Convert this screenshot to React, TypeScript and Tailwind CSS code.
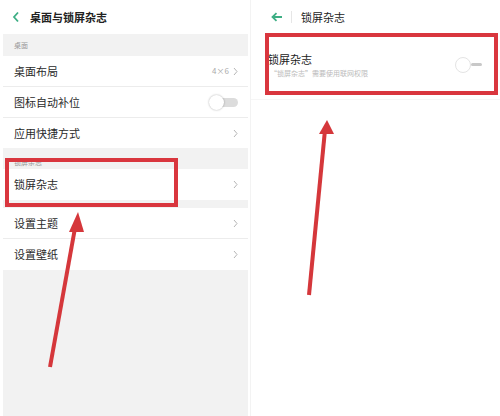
import React from "react";

const font = { fontFamily: '"Noto Sans CJK SC", "Noto Sans", sans-serif' };

function Chevron() {
    return (
        <svg width="5" height="9" viewBox="0 0 5 9" className="shrink-0">
            <path d="M1 1 L4 4.5 L1 8" fill="none" stroke="#b5b5b5" strokeWidth="1" />
        </svg>
    );
}

function Row({
    label,
    right,
    border = true,
    h = "h-[31px]",
}: {
    label: string;
    right: React.ReactNode;
    border?: boolean;
    h?: string;
}) {
    return (
        <div
            className={`${h} bg-white flex items-center justify-between pl-[11px] pr-[10px] ${
                border ? "border-b border-[#ececec]" : ""
            }`}
        >
            <span className="text-[11px] text-[#2a2a2a]">{label}</span>
            {right}
        </div>
    );
}

function SmallToggle() {
    return (
        <div className="relative w-[29px] h-[16px] flex items-center">
            <div className="absolute right-0 w-[22px] h-[9px] rounded-full bg-[#dcdcdc]" />
            <div className="absolute left-0 w-[15px] h-[15px] rounded-full bg-white shadow-[0_0_2px_rgba(0,0,0,0.35)]" />
        </div>
    );
}

export default function App() {
    return (
        <div className="relative w-[500px] h-[416px] flex bg-white overflow-hidden" style={font}>
            {/* left screen */}
            <div className="w-[250px] h-full flex flex-col bg-white">
                <div className="h-[34px] flex items-center gap-[10px] pl-[12px] shrink-0">
                    <svg width="8" height="12" viewBox="0 0 8 12">
                        <path d="M6 1.5 L2 6 L6 10.5" fill="none" stroke="#3dae84" strokeWidth="1.8" />
                    </svg>
                    <span className="text-[11px] font-semibold text-[#222]">桌面与锁屏杂志</span>
                </div>
                <div className="flex-1 ml-[3px] mr-[2px] bg-[#f2f2f2] flex flex-col">
                    <div className="h-[22px] flex items-center pl-[11px] text-[7px] text-[#999]">桌面</div>
                    <Row
                        label="桌面布局"
                        right={
                            <span className="flex items-center gap-[4px] text-[8px] text-[#aaa]">
                                4×6 <Chevron />
                            </span>
                        }
                    />
                    <Row label="图标自动补位" right={<SmallToggle />} />
                    <Row label="应用快捷方式" right={<Chevron />} border={false} h="h-[30px]" />
                    <div className="h-[21px] flex items-end pb-[2px] pl-[11px] text-[7px] text-[#999]">锁屏杂志</div>
                    <Row label="锁屏杂志" right={<Chevron />} border={false} />
                    <div className="h-[8px]" />
                    <Row label="设置主题" right={<Chevron />} />
                    <Row label="设置壁纸" right={<Chevron />} border={false} />
                </div>
            </div>

            {/* right screen */}
            <div className="w-[250px] h-full flex flex-col bg-white border-l border-[#f3f3f3]">
                <div className="h-[34px] flex items-center pl-[20px] shrink-0">
                    <svg width="12" height="10" viewBox="0 0 12 10">
                        <path d="M11 5 H2 M5.5 1.2 L1.5 5 L5.5 8.8" fill="none" stroke="#3dae84" strokeWidth="1.8" />
                    </svg>
                    <div className="w-px h-[12px] bg-[#e6e6e6] ml-[8px] mr-[9px]" />
                    <span className="text-[11px] text-[#222]">锁屏杂志</span>
                </div>
                <div className="h-[66px] flex items-center justify-between pl-[17px] pr-[17px] pb-[4px] border-b border-[#f6f6f6]">
                    <div className="flex flex-col gap-[1px]">
                        <span className="text-[11px] text-[#222] leading-[16px]">锁屏杂志</span>
                        <span className="text-[7px] text-[#bbb] leading-[10px] pl-[2px]">“锁屏杂志”需要使用联网权限</span>
                    </div>
                    <div className="flex items-center pr-[1px]">
                        <div className="w-[16px] h-[16px] rounded-full border border-[#e4e4e4] bg-white" />
                        <div className="w-[11px] h-[3px] bg-[#c8c8c8] rounded-full" />
                    </div>
                </div>
            </div>

            {/* annotations */}
            <div className="absolute left-[5px] top-[158px] w-[173px] h-[49px] border-[4px] border-[#d9363e]" />
            <div className="absolute left-[265px] top-[33px] w-[233px] h-[62px] border-[4px] border-[#d9363e]" />
            <svg className="absolute inset-0 pointer-events-none" width="500" height="416">
                <line x1="50" y1="367" x2="75" y2="228" stroke="#d5373b" strokeWidth="4" />
                <polygon points="78,212 69,232 84,232" fill="#d5373b" />
                <line x1="309" y1="295" x2="325" y2="130" stroke="#d5373b" strokeWidth="4" />
                <polygon points="327,120 319,134 334,134" fill="#d5373b" />
            </svg>
        </div>
    );
}
